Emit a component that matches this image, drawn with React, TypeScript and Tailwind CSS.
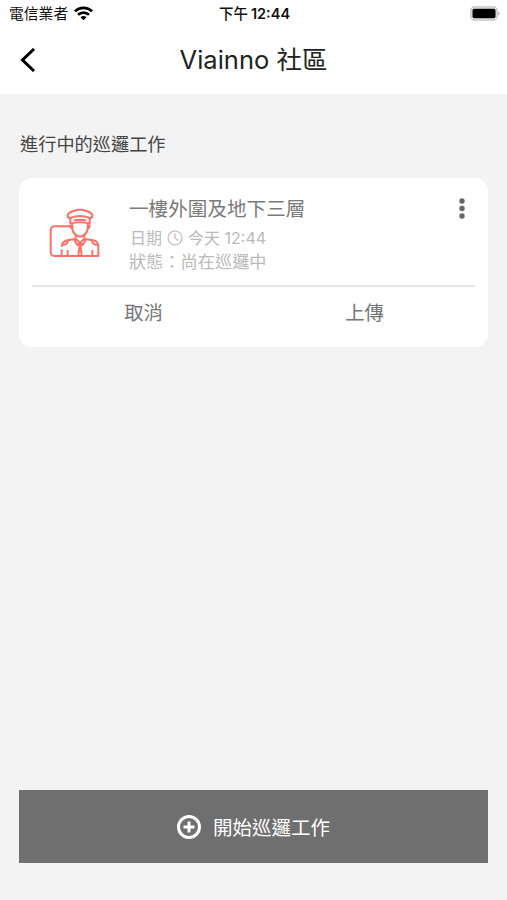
import type { ReactNode } from "react";

function WifiIcon() {
  return (
    <svg className="h-[15px] w-[19px]" viewBox="0 0 19 15" fill="none" stroke="#000" strokeWidth="2.7">
      <path d="M.9 5.4C5.700.8 13.300.8 18.100 5.400" />
      <path d="M4 8.700c3.200-2.900 7.800-2.900 11 0" />
      <path d="M6.500 11.200c1.700-1.600 4.300-1.600 6 0l-3 3z" fill="#000" stroke="none" />
    </svg>
  );
}

function BatteryIcon() {
  return (
    <svg className="h-[15px] w-[30px]" viewBox="0 0 30 15">
      <rect x=".8" y=".8" width="26.400" height="13.400" rx="4" fill="#e4e4e4" stroke="#c4c4c4" strokeWidth="1.300" />
      <rect x="2.500" y="2.700" width="23" height="9.600" rx="1.800" fill="#000" />
      <path d="M28.200 5.200q3 2.300 0 4.600z" fill="#b5b5b5" />
    </svg>
  );
}

function GuardIcon() {
  return (
    <svg
      className="h-[52px] w-[52px]"
      viewBox="27 36 156 156"
      fill="none"
      stroke="#fb7268"
      strokeWidth="6"
      strokeLinecap="round"
      strokeLinejoin="round"
    >
      <path d="M88 94H45q-13 0-13 13v63q0 13 13 13h130v-30q0-14-16-17l-25-4" />
      <path d="M106 132l-24 4q-16 4-16 17M65 166v17" />
      <path d="M91 71q-10-4-8-11 4-8 18-12 19-7 38 0 14 4 18 12 2 7-8 11" />
      <path d="M91 69q29-12 58 0v17q-29-9-58 0z" />
      <path d="M104 76q16-3 32 0" />
      <path d="M97 90v12q4 20 23 23 19-3 23-23V90M92 91q-2 6 4 10M148 91q2 6-4 10" />
      <path d="M107 124v7l13 12 13-12v-7M107 132l-4 4 9 14 8-7 8 7 9-14-4-4M119 147l-4 35M121 147l4 35" />
      <path d="M68 149q12 2 16-11M172 149q-12 2-16-11M83 167v15M157 167v15" />
    </svg>
  );
}

function CardAction({ children }: { children: ReactNode }) {
  return <button className="flex-1 text-center text-[19.300px] leading-[28px] text-[#757575]">{children}</button>;
}

export default function App() {
  return (
    <div className="flex h-[900px] w-[507px] flex-col bg-[#f3f3f3] font-['Inter','Noto_Sans_CJK_TC',sans-serif] text-[#333]">
      <header className="h-[94px] bg-white">
        <div className="grid h-[26px] grid-cols-3 items-center pr-[7px] pl-[9px] text-[14.800px] leading-[26px] text-[#111]">
          <div className="flex items-center gap-[6px]">
            <span className="pt-px">電信業者</span>
            <WifiIcon />
          </div>
          <div className="flex justify-center gap-[3px] whitespace-nowrap text-[14.500px] font-medium">
            <span>下午</span>
            <span className="font-semibold">12:44</span>
          </div>
          <div className="flex justify-end">
            <BatteryIcon />
          </div>
        </div>
        <div className="grid h-[68px] grid-cols-[48px_1fr_48px] items-center">
          <button aria-label="返回" className="pl-[20px]">
            <svg className="h-[24px] w-[16px]" viewBox="0 0 16 24" fill="none" stroke="#000" strokeWidth="3">
              <path d="M14 1L2.500 12L14 23" />
            </svg>
          </button>
          <h1 className="text-center text-[25.500px] leading-[36px] text-[#222]">Viainno 社區</h1>
        </div>
      </header>

      <main className="flex flex-1 flex-col px-[19px] pt-[37px] pb-[37px]">
        <h2 className="pl-px text-[18.200px] leading-[27px] text-[#444]">進行中的巡邏工作</h2>

        <section className="mt-[20px] h-[169px] rounded-[13px] bg-white px-[13px]">
          <div className="flex h-[109px] items-start border-b-2 border-[#e5e5e5] pl-[17px]">
            <div className="pt-[29px]">
              <GuardIcon />
            </div>
            <div className="flex-1 pt-[17px] pl-[28px]">
              <h3 className="text-[19.600px] leading-[28px] text-[#7a7a7a]">一樓外圍及地下三層</h3>
              <div className="mt-[4px] flex items-center gap-[5px] pl-px text-[16px] leading-[23px] text-[#bababa]">
                <span>日期</span>
                <svg className="-mt-px h-[16px] w-[16px]" viewBox="0 0 16 16" fill="none" stroke="currentColor" strokeWidth="1.200">
                  <circle cx="8" cy="8" r="7" />
                  <path d="M8 3.500V8l3.200 2.500" />
                </svg>
                <span>今天 12:44</span>
              </div>
              <p className="text-[17.200px] leading-[23px] text-[#bababa]">狀態：尚在巡邏中</p>
            </div>
            <button aria-label="更多" className="pt-[20px] pr-[10px]">
              <svg className="h-[21px] w-[6px]" viewBox="0 0 6 21" fill="#666">
                <circle cx="3" cy="3" r="2.700" />
                <circle cx="3" cy="10.500" r="2.700" />
                <circle cx="3" cy="18" r="2.700" />
              </svg>
            </button>
          </div>
          <div className="flex pt-[12px] pl-px">
            <CardAction>取消</CardAction>
            <CardAction>上傳</CardAction>
          </div>
        </section>

        <button className="mt-auto flex h-[73px] items-center justify-center gap-[12px] bg-[#6f6f6f] text-[19.500px] leading-[28px] text-white">
          <svg className="h-[24px] w-[24px]" viewBox="0 0 24 24" fill="none" stroke="currentColor" strokeWidth="3">
            <circle cx="12" cy="12" r="10.500" />
            <path d="M12 6.500v11M6.500 12h11" />
          </svg>
          <span className="pt-[2px]">開始巡邏工作</span>
        </button>
      </main>
    </div>
  );
}
